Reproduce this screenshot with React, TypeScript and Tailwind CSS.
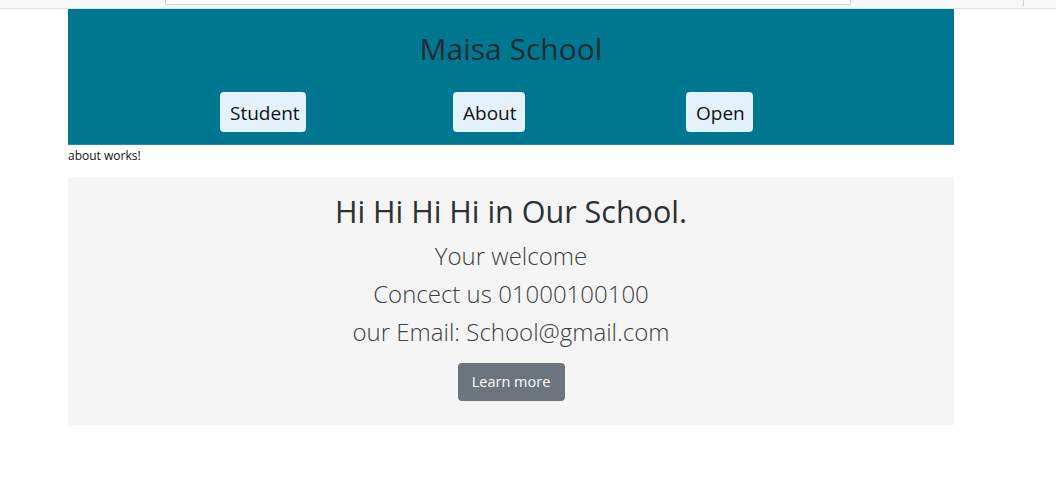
import React from 'react'

const FONT = { fontFamily: '"Open Sans", "Noto Sans", "Liberation Sans", sans-serif' }

function NavButton({ label, className }: { label: string; className?: string }) {
  return (
    <button
      className={`h-[40px] px-[10px] pt-[3px] rounded-[4px] bg-[#e3f2fd] text-[19px] text-[#111] leading-none ${className ?? ''}`}
    >
      {label}
    </button>
  )
}

export default function App(): JSX.Element {
  return (
    <div className="min-h-screen bg-white" style={FONT}>
      {/* browser chrome remnant */}
      <div className="h-[9px] bg-[#f7f8fa] border-b border-[#e2e3e6] flex items-start">
        <div className="ml-[165px] w-[686px] h-[5px] bg-white border border-t-0 border-[#d4d4d4] rounded-b-[2px]" />
        <div className="ml-[172px] w-px h-[6px] bg-[#d0d0d0]" />
      </div>

      <div className="ml-[68px] w-[886px]">
        {/* Header */}
        <header className="bg-[#007791] border-b border-[#2a8ca3] h-[136px] flex flex-col">
          <h1 className="h-[83px] pt-[20px] text-center text-[30px] leading-[40px] text-[#1e2b33]">
            Maisa School
          </h1>
          <nav className="flex">
            <NavButton label="Student" className="ml-[152px] w-[86px]" />
            <NavButton label="About" className="ml-[147px] w-[72px]" />
            <NavButton label="Open" className="ml-[161px] w-[67px]" />
          </nav>
        </header>

        <p className="h-[32px] pt-[3px] text-[12px] leading-[16px] text-[#111]">about works!</p>

        {/* Jumbotron */}
        <section className="bg-[#f6f5f5] h-[248px] flex flex-col items-center pt-[13px] text-[#3a3f44]">
          <h2 className="text-[30.5px] leading-[42px] text-[#2b3034]">Hi Hi Hi Hi in Our School.</h2>
          <p className="mt-[5px] text-[24px] leading-[38px] font-light">Your welcome</p>
          <p className="text-[24px] leading-[38px] font-light">Concect us 01000100100</p>
          <p className="text-[24px] leading-[38px] font-light">our Email: School@gmail.com</p>
          <button className="mt-[12px] w-[107px] h-[38px] rounded-[4px] bg-[#6c757d] text-white text-[14.5px]">
            Learn more
          </button>
        </section>
      </div>
    </div>
  )
}
